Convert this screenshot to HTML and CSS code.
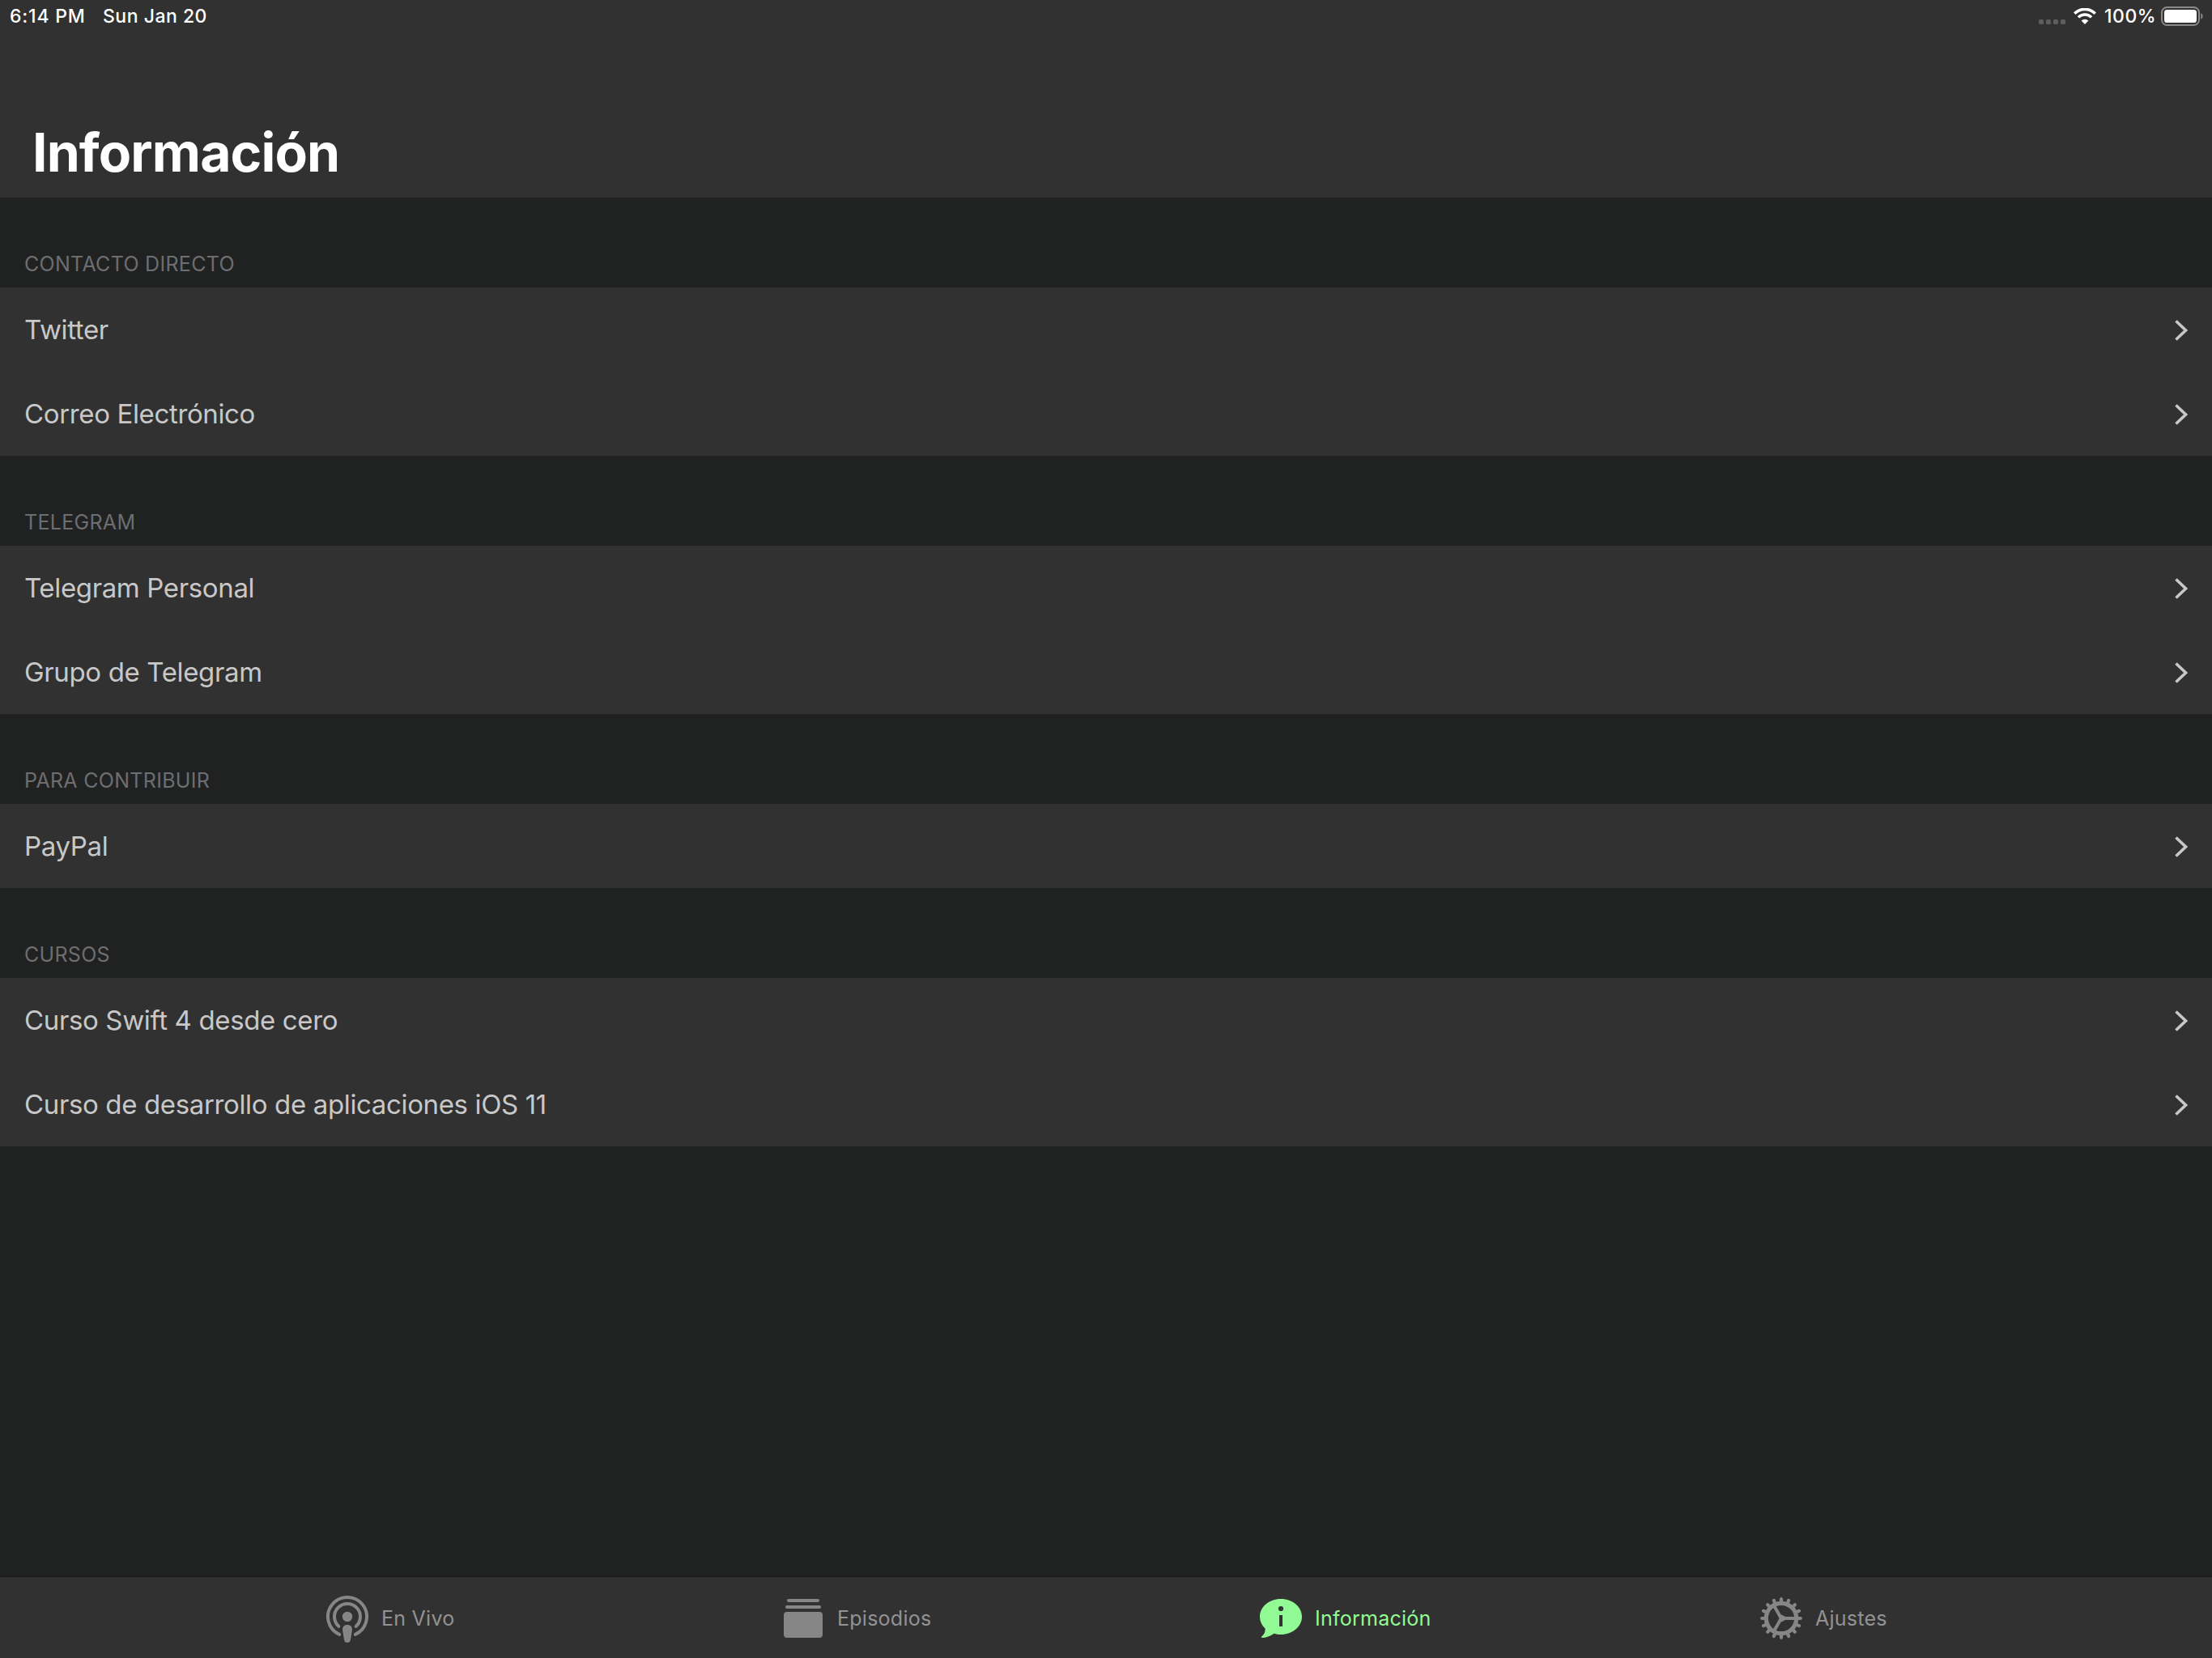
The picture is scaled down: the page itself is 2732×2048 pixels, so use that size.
FILE: index.html
```html
<!DOCTYPE html>
<html lang="es">

<head>
    <meta charset="UTF-8">
    <meta name="viewport" content="width=device-width, initial-scale=1.0">
    <title>Información</title>
    <link rel="stylesheet" href="styles.css">
</head>

<body>
    <svg width="0" height="0" class="defs">
        <symbol id="chevron" viewBox="0 0 16 26">
            <path d="M1.5 1.5 L13.6 13 L1.5 24.5" fill="none" stroke="#c7c7cc" stroke-width="3.6" />
        </symbol>
    </svg>

    <header class="header">
        <div class="status-bar">
            <span class="time">6:14 PM</span>
            <span class="date">Sun Jan 20</span>
            <div class="status-icons">
                <svg class="signal" width="34" height="6" viewBox="0 0 34 6" fill="#5d5d5d">
                    <rect x="0" width="6" height="6" rx="1.6" />
                    <rect x="9" width="6" height="6" rx="1.6" />
                    <rect x="18" width="6" height="6" rx="1.6" />
                    <rect x="27" width="6" height="6" rx="1.6" />
                </svg>
                <svg class="wifi" width="28" height="20" viewBox="0 0 28 20">
                    <path d="M1.3 6.7 A18 18 0 0 1 26.7 6.7" fill="none" stroke="#fff" stroke-width="3.6" />
                    <path d="M5.9 11.4 A11.5 11.5 0 0 1 22.1 11.4" fill="none" stroke="#fff" stroke-width="3.4" />
                    <path d="M14 20 L9.6 15.6 A6.2 6.2 0 0 1 18.4 15.6 Z" fill="#fff" />
                </svg>
                <span class="percent">100%</span>
                <svg class="battery" width="53" height="24" viewBox="0 0 53 24">
                    <rect x="1" y="1" width="46" height="22" rx="6.5" fill="none" stroke="#8a8a8a" stroke-width="2" />
                    <rect x="4" y="4" width="40" height="16" rx="3.6" fill="#fff" />
                    <path d="M49.3 8 A4.6 4.6 0 0 1 49.3 16 Z" fill="#8a8a8a" />
                </svg>
            </div>
        </div>
        <h1>Información</h1>
    </header>

    <main class="content">
        <section>
            <h2>CONTACTO DIRECTO</h2>
            <ul>
                <li><span>Twitter</span><svg class="chevron"><use href="#chevron" /></svg></li>
                <li><span>Correo Electrónico</span><svg class="chevron"><use href="#chevron" /></svg></li>
            </ul>
        </section>
        <section>
            <h2>TELEGRAM</h2>
            <ul>
                <li><span>Telegram Personal</span><svg class="chevron"><use href="#chevron" /></svg></li>
                <li><span>Grupo de Telegram</span><svg class="chevron"><use href="#chevron" /></svg></li>
            </ul>
        </section>
        <section>
            <h2>PARA CONTRIBUIR</h2>
            <ul>
                <li><span>PayPal</span><svg class="chevron"><use href="#chevron" /></svg></li>
            </ul>
        </section>
        <section>
            <h2>CURSOS</h2>
            <ul>
                <li><span>Curso Swift 4 desde cero</span><svg class="chevron"><use href="#chevron" /></svg></li>
                <li><span>Curso de desarrollo de aplicaciones iOS 11</span><svg class="chevron"><use href="#chevron" /></svg></li>
            </ul>
        </section>
    </main>

    <nav class="tab-bar">
        <a class="tab live">
            <svg width="52" height="58" viewBox="0 0 52 58">
                <g fill="none" stroke="currentColor" stroke-width="4" stroke-linecap="round">
                    <path d="M16.2 47.9 A24 24 0 1 1 35.8 47.9" />
                    <path d="M15.4 38 A16 16 0 1 1 36.6 38" />
                </g>
                <circle cx="26" cy="26" r="6.2" />
                <path d="M20 42 C20 38 22.5 36 26 36 C29.5 36 32 38 32 42 L30 54.5 C29.7 57 28 58 26 58 C24 58 22.3 57 22 54.5 Z" />
            </svg>
            <span>En Vivo</span>
        </a>
        <a class="tab episodes">
            <svg width="48" height="48" viewBox="0 0 48 48">
                <rect x="4" y="0" width="40" height="4" rx="2" />
                <rect x="2" y="8" width="44" height="4" rx="2" />
                <rect x="0" y="16" width="48" height="32" rx="4" />
            </svg>
            <span>Episodios</span>
        </a>
        <a class="tab active">
            <svg width="52" height="48" viewBox="0 0 52 48">
                <path d="M26 0 C40.4 0 52 9.8 52 22 C52 34.2 40.4 44 26 44 C23 44 20 43.5 17.5 42.7 C13 45.8 8 48 2.6 48 C1.6 48 1.6 47.2 2.3 46.6 C5.5 43.8 7 40.5 6.6 36.6 C2.5 32.8 0 27.7 0 22 C0 9.8 11.6 0 26 0 Z" />
                <circle class="cut" cx="26" cy="12" r="3.1" />
                <rect class="cut" x="24" y="20" width="4" height="14" />
            </svg>
            <span>Información</span>
        </a>
        <a class="tab">
            <svg width="52" height="52" viewBox="-26 -26 52 52">
                <g fill="none" stroke="currentColor">
                    <circle r="18.7" stroke-width="5.2" />
                    <path stroke-width="4.2" stroke-linecap="round" d="M20 0H23.8 M-20 0H-23.8 M0 20V23.8 M0 -20V-23.8
                        M18.5 7.7L22 9.1 M18.5 -7.7L22 -9.1 M-18.5 7.7L-22 9.1 M-18.5 -7.7L-22 -9.1
                        M14.1 14.1L16.8 16.8 M14.1 -14.1L16.8 -16.8 M-14.1 14.1L-16.8 16.8 M-14.1 -14.1L-16.8 -16.8
                        M7.7 18.5L9.1 22 M7.7 -18.5L9.1 -22 M-7.7 18.5L-9.1 22 M-7.7 -18.5L-9.1 -22" />
                    <path stroke-width="4" d="M0 0H17 M0 0L-8.5 -14.7 M0 0L-8.5 14.7" />
                </g>
                <path d="M5 -2 L5 2 L0.5 4.5 L-4 3 L-2.2 0 L-4 -3 L0.5 -4.5 Z" />
            </svg>
            <span>Ajustes</span>
        </a>
    </nav>
</body>

</html>
```
FILE: styles.css
```css
* {
    box-sizing: border-box;
    margin: 0;
    padding: 0;
}

body {
    display: flex;
    flex-direction: column;
    height: 2048px;
    background: #202221;
    color: #c8c8c8;
    font-family: Inter, "Liberation Sans", sans-serif;
    overflow: hidden;
}

.defs {
    position: absolute;
}

.header {
    display: flex;
    flex-direction: column;
    justify-content: space-between;
    height: 244px;
    padding-bottom: 16px;
    background: #313131;
    color: #fff;
}

.status-bar {
    display: flex;
    height: 41px;
    padding: 0 10px 0 12px;
    font-size: 23px;
    font-weight: 500;
    letter-spacing: 0.5px;
    line-height: 41px;
}

.time {
    width: 115px;
    letter-spacing: 0.8px;
}

.status-icons {
    display: flex;
    align-items: flex-start;
    margin-left: auto;
}

.signal {
    margin: 24px 9px 0 0;
}

.wifi {
    margin: 10px 10px 0 0;
}

.percent {
    width: 70px;
}

.battery {
    margin-top: 8px;
}

h1 {
    padding-left: 40px;
    font-size: 66px;
    font-weight: 700;
    letter-spacing: -0.9px;
    line-height: 80px;
}

.content {
    flex: 1;
}

h2 {
    height: 111px;
    padding: 67px 30px 0;
    color: #6d6d72;
    font-size: 25px;
    font-weight: 400;
    letter-spacing: 0.3px;
    line-height: 30px;
}

ul {
    list-style: none;
    background: #313131;
}

li {
    display: flex;
    align-items: center;
    justify-content: space-between;
    height: 104px;
    padding: 0 30px;
    font-size: 33px;
    letter-spacing: -0.36px;
    line-height: 40px;
}

.chevron {
    width: 16px;
    height: 26px;
    margin-top: 2px;
}

.tab-bar {
    display: grid;
    grid-template-columns: 565px 588px 618px auto;
    height: 101px;
    padding: 2px 0 0 403px;
    border-top: 1px solid #161716;
    background: #313131;
}

.tab {
    display: flex;
    align-items: center;
    color: #868686;
    font-size: 25px;
    letter-spacing: 0.25px;
    line-height: 30px;
}

.tab svg {
    flex: none;
    fill: currentColor;
}

.tab span {
    margin-left: 16px;
    color: #929292;
}

.live svg {
    margin-top: 2px;
}

.episodes span {
    margin-left: 18px;
}

.tab.active,
.tab.active span {
    color: #92fa94;
}

.tab .cut {
    fill: #313131;
}
```
